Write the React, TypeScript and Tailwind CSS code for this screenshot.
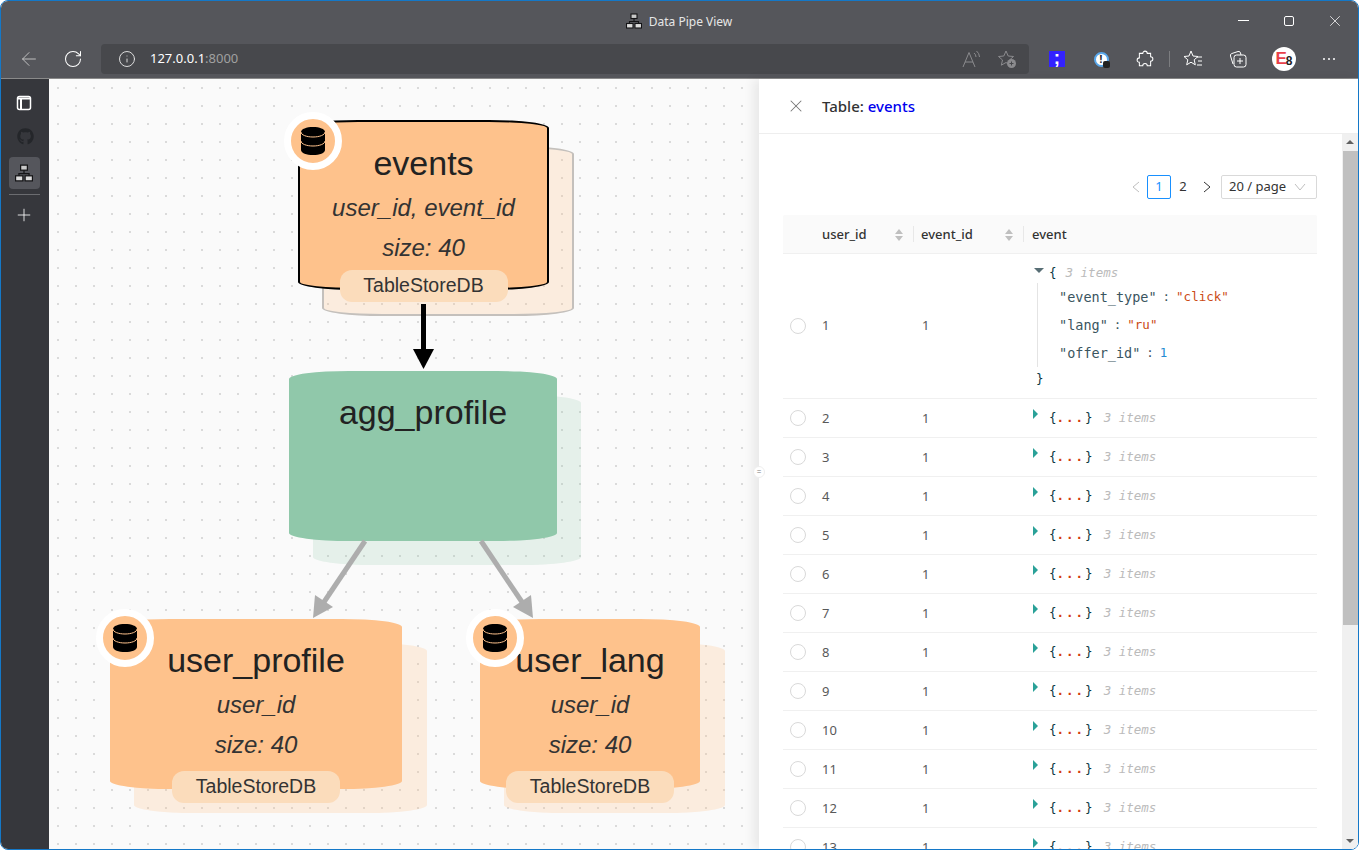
import { ArrowLeft, Info, Plus, RotateCw, X } from "lucide-react";
import { FaGithub } from "react-icons/fa";

const ROWS = [2, 3, 4, 5, 6, 7, 8, 9, 10, 11, 12, 13];
const ROW_COLS = "grid grid-cols-[39px_91px_110px_1fr]";

function SitemapIcon({ className }: { className?: string }) {
  return (
    <svg viewBox="0 0 16 16" className={className} fill="none" stroke="#141416" strokeWidth="1.100">
      <rect x="5" y="1" width="6" height="4.500" fill="#c8c8c8" />
      <rect x="0.500" y="10.500" width="6.500" height="4.500" fill="#dcdcdc" />
      <rect x="9" y="10.500" width="6.500" height="4.500" fill="#dcdcdc" />
      <path d="M8 5.500v3M3.500 10.500v-2h9v2" />
    </svg>
  );
}

function DbIcon() {
  return (
    <svg viewBox="0 0 24 28" className="h-7 w-6">
      <path d="M0 5C0 2 5.500 0 12 0s12 2 12 5v18c0 3-5.500 5-12 5S0 26 0 23z" fill="#000" />
      <path
        d="M0 5c0 3 5.500 5 12 5s12-2 12-5M0 14c0 3 5.500 5 12 5s12-2 12-5"
        fill="none"
        stroke="#fec28c"
        strokeWidth="1"
      />
    </svg>
  );
}

function TableNode({
  name,
  keys,
  width,
  left,
  top,
  green,
  outlined,
  badgeWidth = 168,
}: {
  name: string;
  keys?: string;
  width: number;
  left: number;
  top: number;
  green?: boolean;
  outlined?: boolean;
  badgeWidth?: number;
}) {
  return (
    <div className="absolute h-[170px]" style={{ left, top, width }}>
      <div
        className={`absolute left-6 rounded-[60px/8px] ${
          green ? "top-6 h-[170px] w-full bg-[#90c8aa]/20" : "w-[calc(100%+1px)] bg-[#fec28c]/25"
        } ${outlined ? "top-[26px] h-[170px] border-2 border-[#c4c0bc]" : ""} ${
          !green && !outlined ? "top-6 h-[170px]" : ""
        }`}
      />
      <div
        className={`relative flex h-full w-full flex-col items-center rounded-[60px/8px] pt-[19px] text-[#222] ${
          green ? "bg-[#90c8aa]" : "bg-[#fec28c]"
        } ${outlined ? "border-2 border-black" : ""}`}
      >
        <div className="text-[34px] leading-[44px]">{name}</div>
        {keys && (
          <>
            <div className="mt-[3px] text-2xl leading-10 text-[#333] italic">{keys}</div>
            <div className="text-2xl leading-10 text-[#333] italic">size: 40</div>
            <div
              className="absolute -bottom-[14px] flex h-8 items-center justify-center rounded-xl bg-[#fbdcbb] text-[19.500px] text-[#333]"
              style={{ width: badgeWidth }}
            >
              TableStoreDB
            </div>
            <div
              className={`absolute flex h-[58px] w-[58px] items-center justify-center rounded-full border-[7px] border-white bg-[#fec28c] ${
                outlined ? "-top-[10px] -left-[16px]" : "-top-[10px] -left-[14px]"
              }`}
            >
              <DbIcon />
            </div>
          </>
        )}
      </div>
    </div>
  );
}

function SortIcon() {
  return (
    <span className="flex flex-col gap-[2px]">
      <span className="h-0 w-0 border-x-[4px] border-b-[5px] border-x-transparent border-b-[#bfbfbf]" />
      <span className="h-0 w-0 border-x-[4px] border-t-[5px] border-x-transparent border-t-[#bfbfbf]" />
    </span>
  );
}

function Radio() {
  return <span className="h-4 w-4 rounded-full border border-[#d9d9d9] bg-white" />;
}

function CollapsedRow({ n }: { n: number }) {
  return (
    <div className={`${ROW_COLS} h-[39px] items-center border-b border-[#f0f0f0] text-[#595959]`}>
      <div className="flex pl-[7px]">
        <Radio />
      </div>
      <div className="pt-px">{n}</div>
      <div className="pt-px pl-[9px]">1</div>
      <div className="relative flex items-center pt-px pl-[26px] font-['DejaVu_Sans_Mono',monospace] text-[12.500px]">
        <span className="absolute top-[1px] left-[10px] h-0 w-0 border-y-[5px] border-l-[5px] border-y-transparent border-l-[#2aa198]" />
        <span className="text-[#073642]">
          {"{"}
          <span className="font-bold tracking-[2px] text-[#d33a0c]">...</span>
          {"}"}
        </span>
        <span className="ml-[11px] text-[#bbb] italic">3 items</span>
      </div>
    </div>
  );
}

function JsonLine({ k, v, blue }: { k: string; v: string; blue?: boolean }) {
  return (
    <div className="flex h-7 items-center whitespace-pre text-[#3a5560]">
      <span className="text-[13.500px]">{k}</span>
      <span className="mx-[6px]">:</span>
      <span className={blue ? "text-[#268bd2]" : "text-[#cb4b16]"}>{v}</span>
    </div>
  );
}

function Sidebar() {
  return (
    <div className="flex w-12 shrink-0 flex-col items-center bg-[#36373c] pt-4 text-white">
      <svg viewBox="0 0 16 16" className="h-4 w-4 -translate-x-px" fill="none" stroke="currentColor" strokeWidth="1.500">
        <rect x="1.500" y="1.500" width="13" height="13" rx="2" />
        <path d="M2 3.500h12" strokeWidth="2" />
        <path d="M5 4v10" strokeWidth="2" />
      </svg>
      <FaGithub className="mt-[17px] h-[17px] w-[17px] text-[#24262a]" />
      <div className="mt-[12px] flex h-8 w-[31px] -translate-x-px items-center justify-center rounded bg-[#55565c]">
        <SitemapIcon className="h-[18px] w-[18px]" />
      </div>
      <div className="mt-[5px] h-px w-[31px] -translate-x-px bg-[#6b6c70]" />
      <Plus className="mt-[10px] h-5 w-5 -translate-x-px" strokeWidth={1} />
    </div>
  );
}

function BrowserChrome() {
  const iconCls = "flex w-11 justify-center";
  return (
    <div className="shrink-0 bg-[#55565b] text-white">
      <div className="relative flex h-[43px] items-center justify-end text-xs text-[#e6e6e6]">
        <div className="absolute inset-0 flex items-center justify-center gap-[7px] pr-[1px] pb-[2px]">
          <SitemapIcon className="h-4 w-4 -translate-y-px" />
          <span>Data Pipe View</span>
        </div>
        <div className="relative flex items-center pb-[4px] text-white">
          <span className="flex w-[46px] justify-center">
            <span className="h-px w-[11px] bg-white" />
          </span>
          <span className="flex w-[46px] justify-center">
            <span className="h-[10px] w-[10px] rounded-[2px] border border-white" />
          </span>
          <span className="flex w-[46px] justify-center">
            <X className="h-[18px] w-[18px]" strokeWidth={1} />
          </span>
        </div>
      </div>
      <div className="flex h-[35px] items-start border-b border-[#8a8a8a] pl-[6px]">
        <div className="flex h-[30px] items-center">
          <span className={iconCls}>
            <ArrowLeft className="h-[22px] w-[22px] text-[#c8c8c8]" strokeWidth={1} />
          </span>
          <span className={iconCls}>
            <RotateCw className="h-5 w-5" strokeWidth={1.250} />
          </span>
        </div>
        <div className="ml-[6px] flex h-[30px] w-[928px] items-center rounded bg-[#47484c] pr-[12px] pl-[17px]">
          <Info className="h-[18px] w-[18px] text-[#e4e4e4]" strokeWidth={1.250} />
          <span className="ml-[14px] font-['Noto_Sans',sans-serif] text-[13px] text-white">
            127.0.0.1<span className="text-[#a0a0a0]">:8000</span>
          </span>
          <span className="ml-auto flex items-center gap-[16px] text-[#8b8b8e]">
            <svg viewBox="0 0 20 20" className="h-5 w-5" fill="none" stroke="currentColor" strokeWidth="1">
              <path d="M2 18L8 3.500 14 18M4 13h8" />
              <path d="M13 4a5 5 0 0 1 2 4M15.500 2a8 8 0 0 1 3 6" />
            </svg>
            <svg viewBox="0 0 20 20" className="h-5 w-5" fill="none" stroke="currentColor" strokeWidth="1">
              <path d="M9 2l2.200 5 5.300.5-4 3.500 1.200 5.200L9 13.500 4.300 16.200 5.500 11l-4-3.500 5.300-.5z" />
              <circle cx="14.500" cy="14.500" r="4.500" fill="#8b8b8e" stroke="none" />
              <path d="M12.500 14.500h4M14.500 12.500v4" stroke="#47484c" />
            </svg>
          </span>
        </div>
        <div className="ml-[6px] flex h-[30px] items-center">
          <span className={iconCls}>
            <span className="flex h-4 w-4 items-center justify-center bg-[#3322ff] font-['Liberation_Sans',sans-serif] text-[19px] leading-none font-bold text-white">
              <span className="-translate-y-[2px]">;</span>
            </span>
          </span>
          <span className={iconCls}>
            <span className="relative flex h-[15px] w-[15px] items-center justify-center rounded-full border-[2px] border-[#59a7ea] bg-white text-[10px] leading-none font-bold text-[#222]">
              !
              <span className="absolute -right-[3px] -bottom-[3px] h-[7px] w-[7px] rounded-[2px] bg-[#222]" />
            </span>
          </span>
          <span className={iconCls}>
            <svg viewBox="0 0 16 16" className="h-[18px] w-[18px]" fill="none" stroke="currentColor" strokeWidth="0.900">
              <path d="M6 3a2 2 0 0 1 4 0h3v3a2 2 0 0 1 0 4v4h-3a2 2 0 0 0-4 0H3v-3a2 2 0 0 1 0-4V3z" />
            </svg>
          </span>
          <span className="ml-[2px] h-4 w-px bg-[#7c7d80]" />
          <span className={`${iconCls} ml-px`}>
            <svg viewBox="0 0 20 20" className="h-5 w-5" fill="none" stroke="currentColor" strokeWidth="1">
              <path d="M8 2l2 5 5 .5-3.800 3.300 1.100 5L8 13.200 3.700 15.800l1.100-5L1 7.500 6 7z" />
              <path d="M14 8h5M15 12h4M14 16h5" />
            </svg>
          </span>
          <span className={`${iconCls} ml-px`}>
            <svg viewBox="0 0 20 20" className="h-5 w-5" fill="none" stroke="currentColor" strokeWidth="1">
              <rect x="6" y="6" width="12" height="12" rx="2.500" />
              <path d="M5 15L2.500 7a2 2 0 0 1 1.400-2.500L10 2.500a2 2 0 0 1 2.500 1.500L13 6M12 9v6M9 12h6" />
            </svg>
          </span>
          <span className={`${iconCls} ml-[2px]`}>
            <span className="relative flex h-6 w-6 items-center justify-center rounded-full bg-white font-['Liberation_Sans',sans-serif] text-[17px] leading-none font-bold">
              <span className="-translate-y-px text-[#e8404a]">E</span>
              <span className="-ml-[1px] translate-y-[2px] text-xs text-[#222]">8</span>
            </span>
          </span>
          <span className={`${iconCls} ml-px`}>
            <span className="flex gap-[3px]">
              <span className="h-[2px] w-[2px] rounded-full bg-white" />
              <span className="h-[2px] w-[2px] rounded-full bg-white" />
              <span className="h-[2px] w-[2px] rounded-full bg-white" />
            </span>
          </span>
        </div>
      </div>
    </div>
  );
}

function Canvas() {
  return (
    <div className="relative flex-1 overflow-hidden bg-[#fafafa] bg-[radial-gradient(circle,#dadada_1px,transparent_1.500px)] bg-[size:18px_18px] font-['Liberation_Sans',sans-serif]">
      <TableNode name="events" keys="user_id, event_id" left={249} top={41} width={251} outlined />
      <TableNode name="agg_profile" left={240} top={292} width={268} green />
      <TableNode name="user_profile" keys="user_id" left={61} top={540} width={292} />
      <TableNode name="user_lang" keys="user_id" left={431} top={540} width={220} />
      {/* edges between the nodes */}
      <svg className="absolute inset-0 h-full w-full" fill="none">
        <path d="M374.500 225v46" stroke="#000" strokeWidth="5" />
        <path d="M364 270h21l-10.500 20z" fill="#000" />
        <path d="M316 462l-41 61" stroke="#adadad" strokeWidth="5" />
        <path d="M264 539l2-23 18 12z" fill="#adadad" />
        <path d="M432 462l41 61" stroke="#adadad" strokeWidth="5" />
        <path d="M484 539l-2-23-18 12z" fill="#adadad" />
      </svg>
    </div>
  );
}

function DetailPanel() {
  return (
    <div className="relative flex w-[599px] shrink-0 flex-col bg-white font-['Noto_Sans',sans-serif] text-[13px] shadow-[-6px_0_10px_rgba(0,0,0,0.07)]">
      <span className="absolute top-[387px] -left-[6px] z-10 flex h-3 w-3 items-center justify-center rounded-full border border-[#eee] bg-white text-[8px] leading-none text-[#777]">
        =
      </span>
      <div className="flex h-[55px] shrink-0 items-center border-b border-[#eeeeee] pl-[27px] text-[#333]">
        <X className="h-5 w-5 text-[#777]" strokeWidth={1.250} />
        <span className="ml-4 text-[15px] font-medium">
          Table: <span className="text-[#0000ee]">events</span>
        </span>
      </div>
      <div className="flex min-h-0 flex-1 overflow-hidden">
        <div className="min-w-0 flex-1 overflow-hidden pt-[41px] pr-[25px] pl-6">
          <div className="flex h-6 items-center justify-end text-[#333]">
            <span className="mr-[7px] text-[#bfbfbf]">
              <svg viewBox="0 0 8 12" className="h-3 w-2" fill="none" stroke="currentColor" strokeWidth="1">
                <path d="M7 1L1 6l6 5" />
              </svg>
            </span>
            <span className="flex h-6 w-6 items-center justify-center rounded-[2px] border border-[#1890ff] text-[#1890ff]">1</span>
            <span className="flex h-6 w-6 items-center justify-center">2</span>
            <span className="ml-2 text-[#333]">
              <svg viewBox="0 0 8 12" className="h-3 w-2" fill="none" stroke="currentColor" strokeWidth="1">
                <path d="M1 1l6 5-6 5" />
              </svg>
            </span>
            <span className="ml-[10px] flex h-6 w-24 items-center justify-between rounded-[2px] border border-[#d9d9d9] pr-[10px] pl-[7px]">
              20 / page
              <svg viewBox="0 0 12 8" className="h-2 w-3 text-[#bfbfbf]" fill="none" stroke="currentColor" strokeWidth="1">
                <path d="M1 1l5 6 5-6" />
              </svg>
            </span>
          </div>
          <div className={`${ROW_COLS} mt-4 h-[39px] items-center rounded-t-[2px] border-b border-[#f0f0f0] bg-[#fafafa] font-medium text-[#333]`}>
            <div />
            <div className="flex h-full items-center justify-between pt-px pr-[10px]">
              user_id
              <SortIcon />
            </div>
            <div className="relative flex h-full items-center justify-between pt-px pr-[10px] pl-2 before:absolute before:top-[11px] before:bottom-[11px] before:left-0 before:w-px before:bg-[#e8e8e8]">
              event_id
              <SortIcon />
            </div>
            <div className="relative flex h-full items-center pt-px pl-[9px] before:absolute before:top-[11px] before:bottom-[11px] before:left-0 before:w-px before:bg-[#e8e8e8]">
              event
            </div>
          </div>
          <div className={`${ROW_COLS} h-[145px] grid-rows-[144px] items-center border-b border-[#f0f0f0] text-[#595959]`}>
            <div className="flex pl-[7px]">
              <Radio />
            </div>
            <div>1</div>
            <div className="pl-[9px]">1</div>
            <div className="relative -mt-[2px] self-start pl-[26px] font-['DejaVu_Sans_Mono',monospace] text-[12.500px]">
              <span className="absolute top-4 left-[11px] h-0 w-0 border-x-[5px] border-t-[5px] border-x-transparent border-t-[#586e75]" />
              <div className="flex h-[31px] items-end text-[#073642]">
                {"{"}
                <span className="ml-[9px] text-[#bbb] italic">3 items</span>
              </div>
              <div className="-ml-3 border-l border-[#e4e4e4] pl-[21px]">
                <JsonLine k={'"event_type"'} v={'"click"'} />
                <JsonLine k={'"lang"'} v={'"ru"'} />
                <JsonLine k={'"offer_id"'} v="1" blue />
              </div>
              <div className="-ml-[13px] pt-[3px] text-[#073642]">{"}"}</div>
            </div>
          </div>
          {ROWS.map((n) => (
            <CollapsedRow key={n} n={n} />
          ))}
        </div>
        <div className="flex w-4 shrink-0 flex-col items-center bg-[#f0f0f0]">
          <span className="mt-[6px] mb-[7px] h-0 w-0 border-x-[4px] border-b-[4px] border-x-transparent border-b-[#606060]" />
          <div className="h-[474px] w-[15px] bg-[#c0c0c0]" />
          <span className="mt-auto mb-[6px] h-0 w-0 border-x-[4px] border-t-[4px] border-x-transparent border-t-[#606060]" />
        </div>
      </div>
    </div>
  );
}

export default function App() {
  return (
    <div className="flex h-[850px] w-[1359px] flex-col overflow-hidden rounded-lg border border-[#1478c8] bg-white">
      <BrowserChrome />
      <div className="flex min-h-0 flex-1">
        <Sidebar />
        <Canvas />
        <DetailPanel />
      </div>
    </div>
  );
}
